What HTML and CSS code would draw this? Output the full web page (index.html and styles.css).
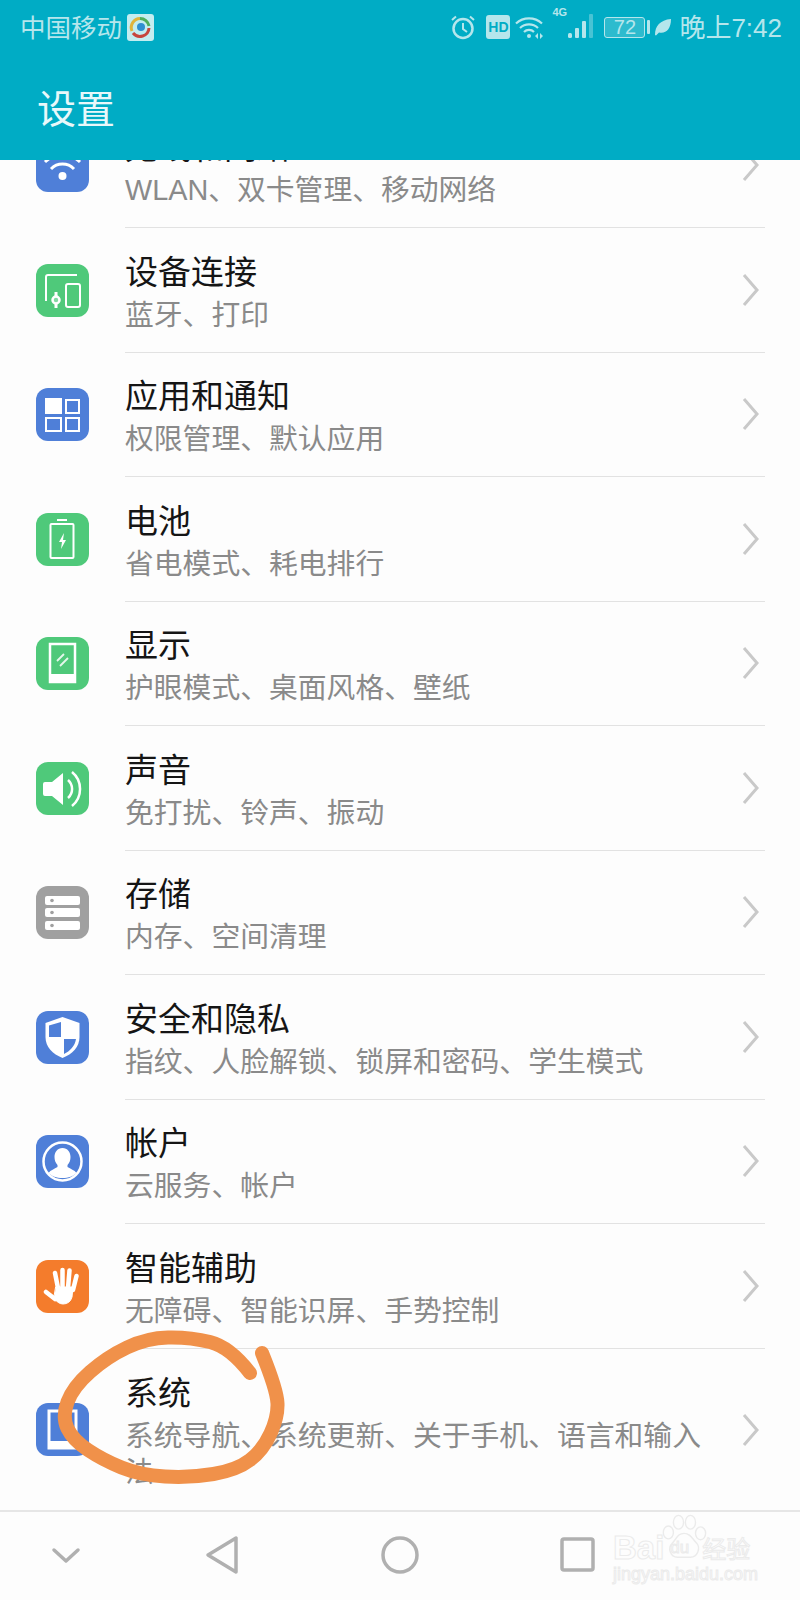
FILE: index.html
```html
<!DOCTYPE html>
<html lang="zh-CN">
<head>
    <meta charset="UTF-8">
    <title>设置</title>
    <link rel="stylesheet" href="styles.css">
</head>
<body>
<div class="app">
    <header class="header">
        <div class="status">
            <div class="status-left">
                <span class="carrier">中国移动</span>
                <svg class="app-logo" width="27" height="27" viewBox="0 0 27 27">
                    <rect width="27" height="27" rx="3" fill="#c4edf0"/>
                    <path d="M5 17A9 9 0 0 1 13 4.500" fill="none" stroke="#e0b43c" stroke-width="3"/>
                    <path d="M13 4.500A9 9 0 0 1 22 12" fill="none" stroke="#4fae5c" stroke-width="3"/>
                    <path d="M22 14A9 9 0 0 1 6 19" fill="none" stroke="#c8453c" stroke-width="3"/>
                    <circle cx="14" cy="13" r="4" fill="#2f8fd0"/>
                </svg>
            </div>
            <div class="status-right">
                <svg width="26" height="26" viewBox="0 0 26 26" fill="none" stroke="#b5e6ec" stroke-width="2.500">
                    <circle cx="13" cy="14.500" r="9.500"/>
                    <path d="M13 9v6l4 3" stroke-width="2"/>
                    <path d="M2 6l4-3.500M24 6l-4-3.500" stroke-width="2"/>
                </svg>
                <span class="hd">HD</span>
                <svg width="30" height="26" viewBox="0 0 30 26" fill="none" stroke="#b5e6ec" stroke-width="2.200">
                    <path d="M1 9.500a19 19 0 0 1 26 0M5 14a13 13 0 0 1 18 0M9 18a7 7 0 0 1 10 0"/>
                    <circle cx="14" cy="22" r="2" fill="#b5e6ec" stroke="none"/>
                    <path d="M20 22l3-3v6zM25 19l3 3-3 3z" fill="#b5e6ec" stroke="none"/>
                </svg>
                <div class="signal">
                    <span class="signal-tag">4G</span>
                    <svg width="26" height="26" viewBox="0 0 26 26" fill="#b5e6ec">
                        <rect x="1" y="20" width="4" height="5" rx="1.500"/>
                        <rect x="8" y="15" width="4" height="10" rx="1"/>
                        <rect x="15" y="8" width="4" height="17" rx="1"/>
                        <rect x="22" y="1" width="4" height="24" rx="1" opacity=".4"/>
                    </svg>
                </div>
                <div class="battery">
                    <span class="battery-box">72</span>
                    <span class="battery-cap"></span>
                </div>
                <svg width="18" height="18" viewBox="0 0 18 18" fill="#b5e6ec">
                    <path d="M1 17C1 8 6 2 17 1 17 11 12 16 5 14.500L2 17.500z"/>
                </svg>
                <span class="clock">晚上7:42</span>
            </div>
        </div>
        <div class="toolbar">设置</div>
    </header>

    <main class="list">
        <div class="list-inner">
            <div class="row">
                <div class="tile blue">
                    <svg viewBox="0 0 53 53" fill="none" stroke="#fff" stroke-width="3">
                        <path d="M9 23a25 25 0 0 1 35 0M15 30a16 16 0 0 1 23 0"/>
                        <circle cx="26.500" cy="37" r="4" fill="#fff" stroke="none"/>
                    </svg>
                </div>
                <div class="row-body">
                    <div class="row-text">
                        <div class="row-title">无线和网络</div>
                        <div class="row-sub">WLAN、双卡管理、移动网络</div>
                    </div>
                    <svg class="chevron" width="17" height="34" viewBox="0 0 17 34"><path d="M2 2l13 15L2 32"/></svg>
                </div>
            </div>
            <div class="row">
                <div class="tile green">
                    <svg viewBox="0 0 53 53" fill="none" stroke="#fff" stroke-width="2">
                        <path d="M10 37V13a2 2 0 0 1 2-2H41"/>
                        <rect x="30" y="20" width="14" height="23" rx="2"/>
                        <circle cx="20" cy="36" r="3.500" fill="#fff" fill-opacity=".3" stroke-width="2.500"/>
                        <path d="M20 28v4M20 40v4" stroke-width="3"/>
                    </svg>
                </div>
                <div class="row-body">
                    <div class="row-text">
                        <div class="row-title">设备连接</div>
                        <div class="row-sub">蓝牙、打印</div>
                    </div>
                    <svg class="chevron" width="17" height="34" viewBox="0 0 17 34"><path d="M2 2l13 15L2 32"/></svg>
                </div>
            </div>
            <div class="row">
                <div class="tile blue">
                    <svg viewBox="0 0 53 53" fill="none" stroke="#fff" stroke-width="2">
                        <rect x="10" y="11" width="15" height="14" fill="#fff"/>
                        <rect x="30" y="12" width="13" height="13"/>
                        <rect x="10" y="30" width="15" height="13"/>
                        <rect x="30" y="30" width="13" height="13"/>
                    </svg>
                </div>
                <div class="row-body">
                    <div class="row-text">
                        <div class="row-title">应用和通知</div>
                        <div class="row-sub">权限管理、默认应用</div>
                    </div>
                    <svg class="chevron" width="17" height="34" viewBox="0 0 17 34"><path d="M2 2l13 15L2 32"/></svg>
                </div>
            </div>
            <div class="row">
                <div class="tile green">
                    <svg viewBox="0 0 53 53" fill="none" stroke="#fff" stroke-width="2">
                        <rect x="14.500" y="11" width="23" height="34" rx="1"/>
                        <path d="M21 7h10"/>
                        <path d="M28 20l-5 9h3l-1 7 5-9h-3z" fill="#fff" stroke="none"/>
                    </svg>
                </div>
                <div class="row-body">
                    <div class="row-text">
                        <div class="row-title">电池</div>
                        <div class="row-sub">省电模式、耗电排行</div>
                    </div>
                    <svg class="chevron" width="17" height="34" viewBox="0 0 17 34"><path d="M2 2l13 15L2 32"/></svg>
                </div>
            </div>
            <div class="row">
                <div class="tile green">
                    <svg viewBox="0 0 53 53" fill="none" stroke="#fff" stroke-width="2.500">
                        <rect x="14" y="7" width="25" height="38"/>
                        <path d="M14 37h25v8H14z" fill="#fff" stroke="none"/>
                        <path d="M21 24l7-7M24 29l8-8" stroke-width="1.800" stroke-opacity=".85"/>
                    </svg>
                </div>
                <div class="row-body">
                    <div class="row-text">
                        <div class="row-title">显示</div>
                        <div class="row-sub">护眼模式、桌面风格、壁纸</div>
                    </div>
                    <svg class="chevron" width="17" height="34" viewBox="0 0 17 34"><path d="M2 2l13 15L2 32"/></svg>
                </div>
            </div>
            <div class="row">
                <div class="tile green">
                    <svg viewBox="0 0 53 53" fill="none" stroke="#fff" stroke-width="2.500">
                        <path d="M7 22q0-2 2-2h7l11-9v32L16 34H9q-2 0-2-2z" fill="#fff" stroke="none"/>
                        <path d="M32 18a12 12 0 0 1 0 18"/>
                        <path d="M36 10a22 22 0 0 1 0 34"/>
                    </svg>
                </div>
                <div class="row-body">
                    <div class="row-text">
                        <div class="row-title">声音</div>
                        <div class="row-sub">免打扰、铃声、振动</div>
                    </div>
                    <svg class="chevron" width="17" height="34" viewBox="0 0 17 34"><path d="M2 2l13 15L2 32"/></svg>
                </div>
            </div>
            <div class="row">
                <div class="tile grey">
                    <svg viewBox="0 0 53 53" fill="#fff">
                        <rect x="9" y="10" width="35" height="9" rx="2"/>
                        <rect x="9" y="22" width="35" height="9" rx="2"/>
                        <rect x="9" y="35" width="35" height="9" rx="2"/>
                        <circle cx="16" cy="14.500" r="1.800" fill="#a0a0a0"/>
                        <circle cx="16" cy="26.500" r="1.800" fill="#a0a0a0"/>
                        <circle cx="16" cy="39.500" r="1.800" fill="#a0a0a0"/>
                    </svg>
                </div>
                <div class="row-body">
                    <div class="row-text">
                        <div class="row-title">存储</div>
                        <div class="row-sub">内存、空间清理</div>
                    </div>
                    <svg class="chevron" width="17" height="34" viewBox="0 0 17 34"><path d="M2 2l13 15L2 32"/></svg>
                </div>
            </div>
            <div class="row">
                <div class="tile blue">
                    <svg viewBox="0 0 53 53">
                        <path d="M26.500 6l17 6v14c0 10-7 17-17 21-10-4-17-11-17-21V12z" fill="#fff"/>
                        <path d="M25 11v15H13V14.500zM28 28h12c-1 7-6 12-12 15z" fill="#4f7fd8"/>
                    </svg>
                </div>
                <div class="row-body">
                    <div class="row-text">
                        <div class="row-title">安全和隐私</div>
                        <div class="row-sub">指纹、人脸解锁、锁屏和密码、学生模式</div>
                    </div>
                    <svg class="chevron" width="17" height="34" viewBox="0 0 17 34"><path d="M2 2l13 15L2 32"/></svg>
                </div>
            </div>
            <div class="row">
                <div class="tile blue">
                    <svg viewBox="0 0 53 53">
                        <circle cx="26.500" cy="26.500" r="19" fill="none" stroke="#fff" stroke-width="2.500"/>
                        <path d="M26.500 13c5 0 8 4 8 9 0 3-1 6-3 8v2c3 2 7 3 9 6-3 3-8 5-14 5s-11-2-14-5c2-3 6-4 9-6v-2c-2-2-3-5-3-8 0-5 3-9 8-9z" fill="#fff"/>
                    </svg>
                </div>
                <div class="row-body">
                    <div class="row-text">
                        <div class="row-title">帐户</div>
                        <div class="row-sub">云服务、帐户</div>
                    </div>
                    <svg class="chevron" width="17" height="34" viewBox="0 0 17 34"><path d="M2 2l13 15L2 32"/></svg>
                </div>
            </div>
            <div class="row">
                <div class="tile orange">
                    <svg viewBox="0 0 53 53" fill="#fff" stroke="#fff" stroke-linecap="round" stroke-width="4.500">
                        <path d="M19 13l3 15M26.500 10v18M33.500 10.500L32 28M40.500 16L37 30M10 32l9 7" fill="none"/>
                        <path d="M20 27h17l-1 10q-2 7-9 7-5 0-9-6z" stroke-width="1"/>
                    </svg>
                </div>
                <div class="row-body">
                    <div class="row-text">
                        <div class="row-title">智能辅助</div>
                        <div class="row-sub">无障碍、智能识屏、手势控制</div>
                    </div>
                    <svg class="chevron" width="17" height="34" viewBox="0 0 17 34"><path d="M2 2l13 15L2 32"/></svg>
                </div>
            </div>
            <div class="row row-last">
                <div class="tile blue">
                    <svg viewBox="0 0 53 53" fill="none" stroke="#fff" stroke-width="3">
                        <rect x="13" y="8" width="27" height="37"/>
                        <path d="M13 41h27" stroke-width="6"/>
                    </svg>
                </div>
                <div class="row-body">
                    <div class="row-text">
                        <div class="row-title">系统</div>
                        <div class="row-sub">系统导航、系统更新、关于手机、语言和输入法</div>
                    </div>
                    <svg class="chevron" width="17" height="34" viewBox="0 0 17 34"><path d="M2 2l13 15L2 32"/></svg>
                </div>
            </div>
        </div>
    </main>

    <nav class="nav">
        <svg class="nav-down" width="34" height="20" viewBox="0 0 34 20"><path d="M5 5l12 11L29 5"/></svg>
        <svg class="nav-back" width="36" height="40" viewBox="0 0 36 40"><path d="M32 3v34L4 20z"/></svg>
        <svg class="nav-home" width="40" height="40" viewBox="0 0 40 40"><circle cx="20" cy="20" r="17"/></svg>
        <svg class="nav-recent" width="40" height="40" viewBox="0 0 40 40"><rect x="4" y="4" width="31" height="31" rx="2"/></svg>
    </nav>

    <!-- 手画的圈 -->
    <svg class="scribble" width="240" height="165" viewBox="0 0 240 165">
        <path d="M200 48Q180 22 160 17Q140 12 118 12.500Q97 13 77 22.500Q57 32 40 47Q23 62 17.500 77Q12 92 17.500 103.500Q23 115 38 125Q53 135 71.500 142.500Q90 150 115 151.500Q140 153 163.500 149Q187 145 200 135Q213 125 220.500 108.500Q228 92 227.500 78.500Q227 65 212 28"/>
    </svg>

    <div class="watermark">
        <svg class="paw" width="46" height="46" viewBox="0 0 50 48" fill="none" stroke="#ebebeb" stroke-width="1.500">
            <ellipse cx="8" cy="19" rx="5.500" ry="7"/>
            <ellipse cx="19" cy="8" rx="5.500" ry="7.500"/>
            <ellipse cx="32" cy="8" rx="5.500" ry="7.500"/>
            <ellipse cx="43" cy="20" rx="5.500" ry="7"/>
            <path d="M25 20c7 0 9 6 14 11 4 5 1 15-7 15H18C10 46 7 36 12 31c5-5 6-11 13-11z"/>
        </svg>
        <div class="wm-logo"><span>Bai</span><span class="wm-du">du</span><span class="wm-cn">经验</span></div>
        <div class="wm-url">jingyan.baidu.com</div>
    </div>
</div>
</body>
</html>
```

FILE: styles.css
```css
*{
    padding: 0;
    margin: 0;
    box-sizing: border-box;
}
body{
    background: #fdfdfd;
    font-family: "Noto Sans CJK SC", "Liberation Sans", sans-serif;
}
.app{
    position: relative;
    width: 800px;
    height: 1600px;
    display: flex;
    flex-direction: column;
    overflow: hidden;
}

/* 顶部 */
.header{
    height: 160px;
    flex: none;
    background: #00acc5;
    position: relative;
    z-index: 2;
}
.status{
    height: 54px;
    display: flex;
    justify-content: space-between;
    align-items: center;
    padding: 0 18px 0 20px;
    color: #b5e6ec;
    font-size: 25.500px;
}
.status-left{
    display: flex;
    align-items: center;
    gap: 5px;
}
.carrier{
    padding-bottom: 3px;
}
.status-right{
    display: flex;
    align-items: center;
}
.hd{
    width: 24px;
    height: 24px;
    margin: 0 5px 0 10px;
    background: #b5e6ec;
    color: #00acc5;
    border-radius: 3px;
    font-family: "Liberation Sans", sans-serif;
    font-size: 14px;
    font-weight: bold;
    line-height: 24px;
    text-align: center;
}
.signal{
    position: relative;
    margin-left: 22px;
}
.signal-tag{
    position: absolute;
    left: -15px;
    top: -3px;
    font-family: "Liberation Sans", sans-serif;
    font-size: 11px;
    font-weight: bold;
}
.battery{
    display: flex;
    align-items: center;
    margin: 0 4px 0 11px;
}
.battery-box{
    width: 41px;
    height: 21px;
    border: 1px solid #b5e6ec;
    border-radius: 3px;
    background: rgba(181, 230, 236, .25);
    font-family: "Liberation Sans", sans-serif;
    font-size: 20px;
    line-height: 19px;
    text-align: center;
}
.battery-cap{
    width: 3px;
    height: 14px;
    margin-left: 2px;
    background: #b5e6ec;
    border-radius: 1px;
}
.clock{
    margin-left: 7px;
    padding-bottom: 3px;
    font-family: "Liberation Sans", "Noto Sans CJK SC", sans-serif;
    font-size: 26px;
}
.toolbar{
    padding-left: 37px;
    color: #e8f8fa;
    font-size: 39px;
    line-height: 104px;
}

/* 列表 */
.list{
    flex: 1;
    min-height: 0;
    overflow: hidden;
}
.list-inner{
    margin-top: -56.5px;
}
.row{
    height: 124.5px;
    padding: 0 35px 0 36px;
    display: flex;
    align-items: center;
}
.row-last{
    height: 162px;
}
.row-last .row-body{
    border-bottom: none;
}
.row-last .row-text{
    margin-top: 0;
}
.tile{
    width: 53px;
    height: 53px;
    flex: none;
    margin-right: 36px;
    border-radius: 12px;
}
.tile svg{
    display: block;
    width: 53px;
    height: 53px;
}
.blue{
    background: #4f7fd8;
}
.green{
    background: #4fc97a;
}
.grey{
    background: #a0a0a0;
}
.orange{
    background: #f47c2c;
}
.row-body{
    flex: 1;
    height: 100%;
    display: flex;
    align-items: center;
    justify-content: space-between;
    padding: 0 6px 0 0;
    border-bottom: 1px solid #e2e2e2;
}
.row-text{
    width: 595px;
    margin-top: 2px;
}
.row-title{
    color: #151515;
    font-size: 33px;
    line-height: 42px;
}
.row-sub{
    margin-top: 6px;
    color: #8a8a8a;
    font-size: 28.8px;
    line-height: 36px;
    font-family: "Liberation Sans", "Noto Sans CJK SC", sans-serif;
}
.chevron{
    flex: none;
    fill: none;
    stroke: #c9c9c9;
    stroke-width: 3;
}

/* 底部导航 */
.nav{
    height: 90px;
    flex: none;
    display: flex;
    align-items: center;
    padding: 0 0 3px 49px;
    border-top: 2px solid #e6e6e6;
    background: #fdfdfd;
}
.nav svg{
    fill: none;
    stroke: #b0b0b0;
    stroke-width: 3.5;
    stroke-linejoin: round;
    stroke-linecap: round;
}
.nav-back{
    margin-left: 121px;
}
.nav-home{
    margin-left: 140px;
}
.nav-recent{
    margin-left: 138px;
}

/* 圈和水印 */
.scribble{
    position: absolute;
    left: 50px;
    top: 1325px;
    z-index: 3;
    fill: none;
    stroke: #f0914a;
    stroke-width: 14;
    stroke-linecap: round;
    stroke-linejoin: round;
}
.watermark{
    position: absolute;
    left: 613px;
    top: 1514px;
    width: 145px;
    height: 72px;
    color: transparent;
    -webkit-text-stroke: 1px #ebebeb;
    z-index: 3;
}
.paw{
    position: absolute;
    left: 48px;
    top: 0;
}
.wm-logo{
    position: absolute;
    left: 0;
    top: 16px;
    display: flex;
    align-items: center;
    font-family: "Liberation Sans", sans-serif;
    font-size: 33px;
    font-weight: bold;
    line-height: 36px;
}
.wm-du{
    margin-left: 6px;
    font-size: 17px;
    font-weight: normal;
}
.wm-cn{
    margin-left: 13px;
    font-family: "Noto Sans CJK SC", sans-serif;
    font-size: 24px;
    font-weight: normal;
}
.wm-url{
    position: absolute;
    left: 0;
    top: 50px;
    font-family: "Liberation Sans", sans-serif;
    font-size: 18px;
    line-height: 20px;
    white-space: nowrap;
}
```
